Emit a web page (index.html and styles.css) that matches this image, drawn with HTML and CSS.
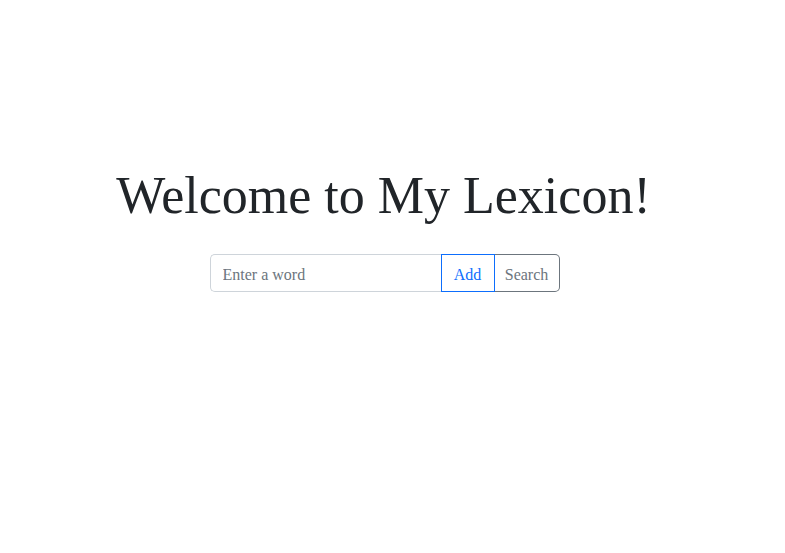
FILE: index.html
```html
<!DOCTYPE html>
<html lang="en">
<head>
<meta charset="utf-8">
<title>My Lexicon</title>
<link rel="stylesheet" href="styles.css">
</head>
<body>
<main class="hero">
  <h1 class="title">Welcome to My Lexicon!</h1>
  <form class="input-group">
    <input class="word-input" type="text" placeholder="Enter a word">
    <button class="btn btn-add" type="button">Add</button>
    <button class="btn btn-search" type="button">Search</button>
  </form>
</main>
</body>
</html>
```
FILE: styles.css
```css
html, body {
  margin: 0;
  padding: 0;
  background: #fff;
}
body {
  font-family: "Liberation Serif", "DejaVu Serif", serif;
  color: #212529;
}
.hero {
  display: flex;
  flex-direction: column;
  align-items: center;
  padding-top: 160px;
  padding-right: 16px;
}
.title {
  margin: 0;
  font-weight: 400;
  font-size: 52px;
  line-height: 72px;
  transform: translateX(-1px);
}
.input-group {
  display: flex;
  margin-top: 22px;
  margin-left: 0;
  height: 38px;
}
.word-input {
  box-sizing: border-box;
  width: 231px;
  height: 38px;
  padding: 8px 12px 4px;
  border: 1px solid #ced4da;
  border-right: none;
  border-radius: 5px 0 0 5px;
  font-family: inherit;
  font-size: 16px;
  color: #212529;
  outline: none;
}
.word-input::placeholder {
  color: #6c757d;
}
.btn {
  box-sizing: border-box;
  height: 38px;
  padding: 3px 0 0;
  background: #fff;
  font-family: inherit;
  font-size: 16px;
  cursor: pointer;
}
.btn-add {
  width: 54px;
  border: 1px solid #0d6efd;
  color: #0d6efd;
}
.btn-search {
  width: 65px;
  border: 1px solid #6c757d;
  border-left: none;
  border-radius: 0 5px 5px 0;
  color: #6c757d;
}
```
